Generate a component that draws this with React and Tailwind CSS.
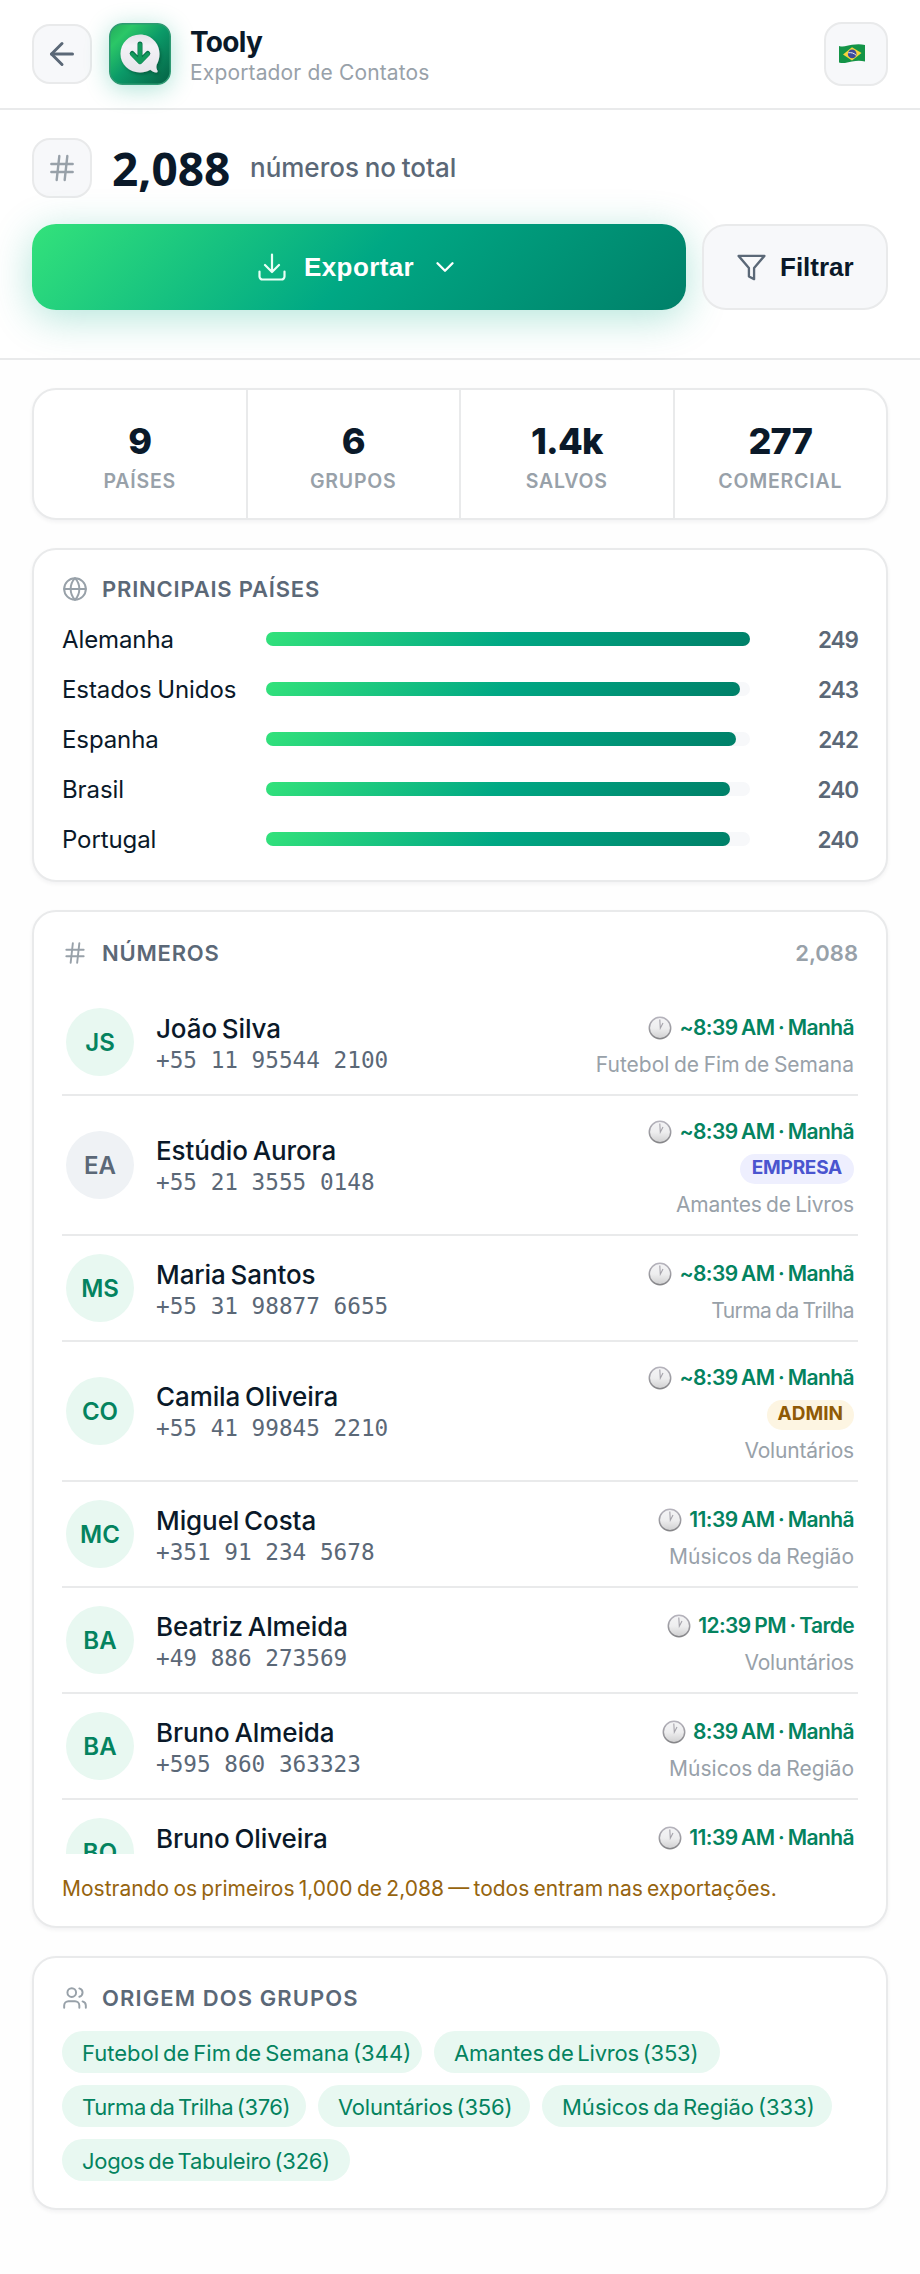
import { ArrowLeft, Hash, ChevronDown, Globe, Users } from "lucide-react";

const countries = [
  { name: "Alemanha", value: 249, bar: 484 },
  { name: "Estados Unidos", value: 243, bar: 474 },
  { name: "Espanha", value: 242, bar: 470 },
  { name: "Brasil", value: 240, bar: 464 },
  { name: "Portugal", value: 240, bar: 464 },
];

const contacts = [
  { initials: "JS", name: "João Silva", phone: "+55 11 95544 2100", time: "~8:39 AM · Manhã", group: "Futebol de Fim de Semana" },
  { initials: "EA", name: "Estúdio Aurora", phone: "+55 21 3555 0148", time: "~8:39 AM · Manhã", group: "Amantes de Livros", badge: "EMPRESA", gray: true, groupClass: "tracking-[-0.200px]" },
  { initials: "MS", name: "Maria Santos", phone: "+55 31 98877 6655", time: "~8:39 AM · Manhã", group: "Turma da Trilha", groupClass: "tracking-[-0.600px]" },
  { initials: "CO", name: "Camila Oliveira", phone: "+55 41 99845 2210", time: "~8:39 AM · Manhã", group: "Voluntários", badge: "ADMIN", groupClass: "tracking-[-0.200px]" },
  { initials: "MC", name: "Miguel Costa", phone: "+351 91 234 5678", time: "11:39 AM · Manhã", group: "Músicos da Região" },
  { initials: "BA", name: "Beatriz Almeida", phone: "+49 886 273569", time: "12:39 PM · Tarde", group: "Voluntários", groupClass: "tracking-[-0.200px]" },
  { initials: "BA", name: "Bruno Almeida", phone: "+595 860 363323", time: "8:39 AM · Manhã", group: "Músicos da Região" },
  { initials: "BO", name: "Bruno Oliveira", phone: "", time: "11:39 AM · Manhã", group: "" },
];

const groups = [
  ["Futebol de Fim de Semana (344)", "w-[360px]"],
  ["Amantes de Livros (353)", "w-[286px] tracking-[-0.200px]"],
  ["Turma da Trilha (376)", "w-[244px] tracking-[-0.400px]"],
  ["Voluntários (356)", "w-[212px] tracking-[-0.200px]"],
  ["Músicos da Região (333)", "w-[290px]"],
  ["Jogos de Tabuleiro (326)", "w-[288px] tracking-[-0.300px]"],
];

function Logo() {
  return (
    <svg viewBox="0 0 62 62" className="size-[62px]">
      <defs>
        <linearGradient id="lg" x1="0" y1="0" x2="1" y2="1">
          <stop offset="0" stopColor="#22a95a" />
          <stop offset="0.2" stopColor="#2bc767" />
          <stop offset="0.5" stopColor="#0b9a68" />
          <stop offset="1" stopColor="#056044" />
        </linearGradient>
        <linearGradient id="bubble" x1="0" y1="0" x2="0" y2="1">
          <stop offset="0" stopColor="#e2e3e8" />
          <stop offset="0.3" stopColor="#f3f2f6" />
          <stop offset="1" stopColor="#e6e5ea" />
        </linearGradient>
        <filter id="soft" x="-30%" y="-30%" width="160%" height="160%">
          <feDropShadow dx="1.5" dy="2" stdDeviation="1.6" floodColor="#03472f" floodOpacity="0.55" />
        </filter>
      </defs>
      <rect x="0.75" y="0.75" width="60.5" height="60.5" rx="13" fill="url(#lg)" stroke="#2f9a73" strokeWidth="1.5" />
      <path
        d="M31 11.5c-11 0-19.5 8.600-19.500 19.300S20 49.500 31 49.500c3.800 0 7.200-1 10.200-2.700 2 1.800 4.600 2.900 6.300 2.600 1.200-.2 1.400-1.200.8-2.200-.9-1.500-1.200-3.600-.6-5.500 1.800-3.200 2.800-6.800 2.800-10.900C50.500 20.100 42 11.500 31 11.500Z"
        fill="url(#bubble)"
        filter="url(#soft)"
      />
      <path d="M31 21v16.500M23.200 30.500l7.800 8 7.800-8" fill="none" stroke="#067048" strokeWidth="5" strokeLinecap="round" strokeLinejoin="round" />
      <path d="M31 21.700v16.500M23.200 31.200l7.800 8 7.800-8" fill="none" stroke="#149a5c" strokeWidth="3.800" strokeLinecap="round" strokeLinejoin="round" />
    </svg>
  );
}

function Flag() {
  return (
    <svg viewBox="0 0 26 20" className="h-5 w-[26px]">
      <path d="M0 2C5 3.500 8 1.500 13 .8 18 0 22 0 26 1v16.500c-4-1-8-1-13 0-5 1.200-9 2.200-13 1Z" fill="#149447" />
      <path d="M4 10.500 13 3.300 22.500 9 13 16.500Z" fill="#f6d33c" />
      <circle cx="13.200" cy="9.900" r="4.300" fill="#3c4a9c" />
      <path d="M9.200 8.800c3-.6 6 .3 8 2.600" fill="none" stroke="#e8ebf5" strokeWidth="1" />
    </svg>
  );
}

function Clock() {
  return (
    <svg viewBox="0 0 24 24" className="size-6 shrink-0">
      <defs>
        <linearGradient id="rim" x1="0" y1="0" x2="0" y2="1">
          <stop offset="0" stopColor="#b5b3bc" />
          <stop offset="1" stopColor="#858588" />
        </linearGradient>
        <linearGradient id="face" x1="0" y1="0" x2="0" y2="1">
          <stop offset="0" stopColor="#f4f4f6" />
          <stop offset="0.500" stopColor="#eeeeef" />
          <stop offset="1" stopColor="#cfcfd0" />
        </linearGradient>
      </defs>
      <circle cx="12" cy="12" r="10.700" fill="url(#face)" stroke="url(#rim)" strokeWidth="1.500" />
      <path d="M11.800 3.500 12.300 12.300 15 7" fill="none" stroke="#a5a3ab" strokeWidth="1.100" />
    </svg>
  );
}

function ExportIcon() {
  return (
    <svg viewBox="0 0 28 28" className="size-7" fill="none" stroke="#e9fff6" strokeWidth="2.200" strokeLinecap="round" strokeLinejoin="round">
      <path d="M14 1.500v17M7 12l7 7 7-7M1.500 18.500v5a3 3 0 0 0 3 3h19a3 3 0 0 0 3-3v-5" />
    </svg>
  );
}

function FunnelIcon() {
  return (
    <svg viewBox="0 0 24 24" className="size-[31px]" fill="none" stroke="#5b6877" strokeWidth="1.800" strokeLinecap="round" strokeLinejoin="round">
      <path d="M22 3H2l8 9.460V19l4 2v-8.540Z" />
    </svg>
  );
}

function Card({ className, children }) {
  return (
    <section className={"rounded-[24px] border-2 border-[#e9eaeb] bg-white shadow-[0_2px_4px_rgba(10,25,41,0.05)] " + className}>
      {children}
    </section>
  );
}

function CardTitle({ icon: Icon, children }) {
  return (
    <div className="flex h-[30px] items-center gap-[14px] text-[22px] font-semibold tracking-[0.800px] text-[#5b6877]">
      <Icon className="size-[26px] text-[#98a1a9]" strokeWidth={1.800} />
      {children}
    </div>
  );
}

function Row({ c }) {
  return (
    <div className={"flex shrink-0 items-center border-b-2 border-[#e9eaeb] px-1 " + (c.badge ? "h-[140px]" : "h-[106px]")}>
      <div className={"flex size-[68px] shrink-0 items-center justify-center rounded-full text-[24px] font-semibold " + (c.gray ? "bg-[#eff2f5] text-[#5b6877]" : "bg-[#e8f8f1] text-[#04835f]")}>
        <span className="pt-[2px]">{c.initials}</span>
      </div>
      <div className={"ml-[22px] flex-1 " + (c.badge ? "pt-[1px]" : "pt-[3px]")}>
        <div className="h-[33px] text-[26px] leading-[34px] font-medium tracking-[-0.100px] [word-spacing:-2px] whitespace-nowrap text-[#0a1929]">{c.name}</div>
        <div className="h-[30px] font-['DejaVu_Sans_Mono',monospace] text-[22.700px] leading-[30px] whitespace-nowrap text-[#5b6877]">{c.phone}</div>
      </div>
      <div className={"flex flex-col items-end " + (c.badge ? "pt-[8px]" : "pt-[10px]")}>
        <div className="flex h-[35px] items-center gap-[7px] text-[21px] font-semibold tracking-[-0.600px] [word-spacing:-1.100px] whitespace-nowrap text-[#04835f]">
          <Clock />
          {c.time}
        </div>
        {c.badge && (
          <div className={"mt-[4px] mb-[2px] flex h-[30px] items-center rounded-full text-[19px] font-bold " + (c.gray ? "bg-[#eeeffe] px-3 tracking-[-0.250px] text-[#4a55cf]" : "bg-[#fdf5e2] px-[11px] text-[#8f5a06]")}>
            {c.badge}
          </div>
        )}
        <div className={"h-[38px] text-[21px] leading-[38px] [word-spacing:-1.300px] whitespace-nowrap text-[#98a1a9] " + (c.groupClass || "")}>{c.group}</div>
      </div>
    </div>
  );
}

export default function App() {
  return (
    <div className="h-[2274px] w-[920px] overflow-hidden bg-[#fefefe] font-[Inter,sans-serif] text-[#0a1929]">
      <header className="flex h-[110px] items-center border-b-2 border-[#e9eaeb] bg-white px-8">
        <div className="flex size-[60px] items-center justify-center rounded-[18px] border-2 border-[#e9eaeb] bg-[#f7f8fa]">
          <ArrowLeft className="size-9 text-[#5b6877]" strokeWidth={2} />
        </div>
        <div className="ml-[17px] size-[62px] rounded-[14px] shadow-[0_4px_24px_rgba(0,168,132,0.32)]">
          <Logo />
        </div>
        <div className="ml-[19px] flex-1 pt-[4px]">
          <div className="text-[28px] leading-[33px] font-bold tracking-[-0.700px]">Tooly</div>
          <div className="text-[21px] leading-[28px] tracking-[0.150px] text-[#98a1a9]">Exportador de Contatos</div>
        </div>
        <div className="flex size-16 items-center rounded-[18px] border-2 border-[#e9eaeb] bg-[#f7f8fa] pl-[13px]">
          <Flag />
        </div>
      </header>

      <div className="h-[250px] border-b-2 border-[#e9eaeb] bg-white px-8 pt-7">
        <div className="flex items-center">
          <div className="flex size-[60px] items-center justify-center rounded-[18px] border-2 border-[#e9eaeb] bg-[#f7f8fa]">
            <Hash className="size-[32px] text-[#98a1a9]" strokeWidth={1.800} />
          </div>
          <div className="ml-[20px] w-[118px] font-['Noto_Sans',sans-serif] text-[46px] leading-[60px] font-bold">2,088</div>
          <div className="ml-[20px] text-[26px] leading-[60px] font-medium [word-spacing:-1.200px] text-[#5b6877]">números no total</div>
        </div>
        <div className="mt-[26px] flex gap-4">
          <div className="flex h-[86px] w-[654px] items-center rounded-[24px] bg-[linear-gradient(135deg,#33e27b_0%,#00a884_50%,#008069_100%)] pl-[226px] font-['Liberation_Sans',sans-serif] text-[26px] font-bold text-white shadow-[0_8px_40px_rgba(0,168,132,0.3)]">
            <ExportIcon />
            <span className="ml-[18px] tracking-[0.400px]">Exportar</span>
            <ChevronDown className="ml-[16px] size-[30px]" strokeWidth={1.900} />
          </div>
          <div className="flex h-[86px] flex-1 items-center rounded-[24px] border-2 border-[#e9eaeb] bg-[#f7f8fa] pl-[32px] font-['Liberation_Sans',sans-serif] text-[26px] font-bold">
            <FunnelIcon />
            <span className="ml-[13px]">Filtrar</span>
          </div>
        </div>
      </div>

      <main className="flex flex-col gap-7 px-8 pt-7">
        <Card className="flex h-[132px]">
          {[["9", "PAÍSES"], ["6", "GRUPOS"], ["1.4k", "SALVOS"], ["277", "COMERCIAL"]].map(([v, l], i) => (
            <div key={l} className={"flex flex-1 flex-col items-center pt-[31px] " + (i ? "border-l-2 border-[#e9eaeb]" : "")}>
              <div className="text-[36px] leading-[40px] font-extrabold tracking-[-0.800px]">{v}</div>
              <div className="mt-[6px] text-[19.500px] leading-[28px] font-semibold tracking-[0.800px] text-[#98a1a9]">{l}</div>
            </div>
          ))}
        </Card>

        <Card className="h-[334px] px-7 pt-[24px]">
          <CardTitle icon={Globe}>PRINCIPAIS PAÍSES</CardTitle>
          <div className="mt-[10px]">
            {countries.map((c) => (
              <div key={c.name} className="flex h-[50px] items-center">
                <div className="w-[204px] pt-[2px] text-[24px] tracking-[-0.100px] [word-spacing:-1px] whitespace-nowrap">{c.name}</div>
                <div className="h-[14px] w-[484px] rounded-full bg-[#f7f8fa]">
                  <div className="h-full rounded-full bg-[linear-gradient(135deg,#33e27b_0%,#00a884_50%,#008069_100%)]" style={{ width: c.bar }} />
                </div>
                <div className="flex-1 pt-[2px] text-right text-[22.500px] font-semibold tracking-[-1px] text-[#5b6877]">{c.value}</div>
              </div>
            ))}
          </div>
        </Card>

        <Card className="h-[1018px] px-7 pt-[25px]">
          <div className="flex h-[32px] items-center justify-between">
            <CardTitle icon={Hash}>NÚMEROS</CardTitle>
            <div className="text-[22px] font-semibold text-[#98a1a9]">2,088</div>
          </div>
          <div className="mt-[21px] flex h-[864px] flex-col overflow-hidden">
            {contacts.map((c) => (
              <Row key={c.name} c={c} />
            ))}
          </div>
          <div className="mt-[19px] text-[21px] leading-[32px] [word-spacing:-1.600px] whitespace-nowrap text-[#96640e]">
            Mostrando os primeiros 1,000 de 2,088 — todos entram nas exportações.
          </div>
        </Card>

        <Card className="h-[254px] px-7 pt-[25px]">
          <CardTitle icon={Users}>
            <span className="tracking-[1.100px]">ORIGEM DOS GRUPOS</span>
          </CardTitle>
          <div className="mt-[18px] flex flex-wrap gap-3">
            {groups.map(([g, w]) => (
              <div key={g} className={"h-[42px] rounded-full bg-[#e8f8f1] pl-5 text-[22px] leading-[44px] [word-spacing:-2.200px] whitespace-nowrap text-[#04835f] " + w}>
                {g}
              </div>
            ))}
          </div>
        </Card>
      </main>
    </div>
  );
}
